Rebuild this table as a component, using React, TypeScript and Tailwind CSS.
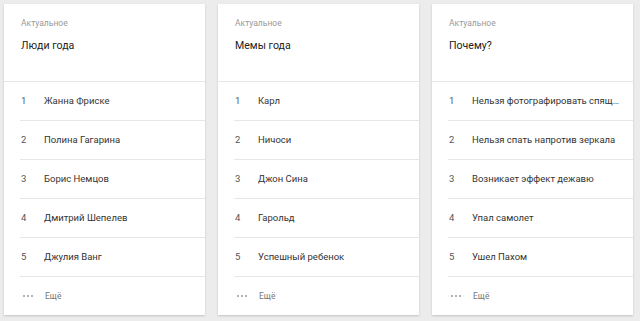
const cards = [
  {
    title: 'Люди года',
    items: ['Жанна Фриске', 'Полина Гагарина', 'Борис Немцов', 'Дмитрий Шепелев', 'Джулия Ванг'],
  },
  {
    title: 'Мемы года',
    items: ['Карл', 'Ничоси', 'Джон Сина', 'Гарольд', 'Успешный ребенок'],
  },
  {
    title: 'Почему?',
    items: [
      'Нельзя фотографировать спящих людей',
      'Нельзя спать напротив зеркала',
      'Возникает эффект дежавю',
      'Упал самолет',
      'Ушел Пахом',
    ],
  },
];

function Card({ title, items }: { title: string; items: string[] }) {
  return (
    <div className="w-[201px] h-[311px] bg-white shadow-[0_1px_2px_rgba(0,0,0,0.18)] flex flex-col">
      <div className="h-[78px] border-b border-[#e6e6e6] pl-[17px] pt-[13px]">
        <div className="text-[8.5px] leading-[12px] text-[#9a9a9a]">Актуальное</div>
        <div className="mt-[9px] text-[10.6px] leading-[16px] text-[#222]">{title}</div>
      </div>
      <div className="pl-[16px]">
        {items.map((name, i) => (
          <div key={name} className="h-[39px] flex items-center border-b border-[#e6e6e6] pr-[10px]">
            <span className="w-[24px] pl-[1px] text-[9.5px] text-[#555]">{i + 1}</span>
            <span className="flex-1 truncate text-[9.5px] text-[#333]">{name}</span>
          </div>
        ))}
        <div className="h-[38px] flex items-center">
          <span className="w-[25px] flex gap-[2px] pl-[3px]">
            <span className="w-[2px] h-[2px] rounded-full bg-[#999]" />
            <span className="w-[2px] h-[2px] rounded-full bg-[#999]" />
            <span className="w-[2px] h-[2px] rounded-full bg-[#999]" />
          </span>
          <span className="text-[8.5px] text-[#777]">Ещё</span>
        </div>
      </div>
    </div>
  );
}

export default function App() {
  return (
    <div className="w-[640px] h-[321px] bg-[#ececec] pl-[4px] pt-[4px] flex gap-[13px] font-['Roboto',sans-serif]">
      {cards.map((c) => (
        <Card key={c.title} title={c.title} items={c.items} />
      ))}
    </div>
  );
}
